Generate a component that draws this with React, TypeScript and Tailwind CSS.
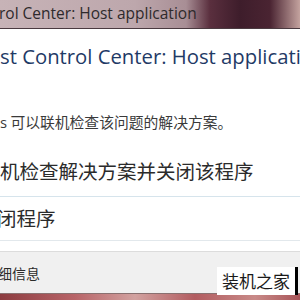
export default function App() {
  const latin = "font-['Open_Sans','Noto_Sans','Noto_Sans_CJK_SC',sans-serif]";
  const cjk = "font-['Noto_Sans_CJK_SC','Noto_Sans',sans-serif]";

  return (
    <div className="relative flex h-[300px] w-[300px] flex-col overflow-hidden bg-white">
      {/* aero title bar */}
      <div className="flex h-[29px] shrink-0 items-center border-b border-[#4a3a40] bg-[linear-gradient(90deg,#c7b3b7_0%,#bda7ac_45%,#a88e95_62%,#5a2f3e_70%,#3e1d2b_80%,#4a2432_90%,#c4a39f_100%)]">
        <span className={`${latin} -ml-[1px] whitespace-nowrap text-[15.5px] text-[#2e2a2c]`}>
          rol Center: Host application
        </span>
      </div>

      <div className="flex flex-1 flex-col">
        <h1 className={`${latin} mt-[13px] whitespace-nowrap text-[20.3px] leading-[28px] text-[#1f3a66]`}>
          st Control Center: Host application
        </h1>

        <p className={`${cjk} mt-[42px] whitespace-nowrap text-[14.8px] leading-[20px] text-[#3a3a3a]`}>
          <span className={latin}>s</span> 可以联机检查该问题的解决方案。
        </p>

        <div className={`${cjk} mt-[25px] whitespace-nowrap text-[19.5px] leading-[28px] text-[#2b2b2b]`}>
          机检查解决方案并关闭该程序
        </div>
        <div className="mt-[11px] h-px bg-[#d6e4ec]" />

        <div className={`${cjk} mt-[7px] -ml-[3px] whitespace-nowrap text-[19.5px] leading-[28px] text-[#2b2b2b]`}>
          闭程序
        </div>
        <div className="mt-[8px] h-px bg-[#e2e8ec]" />

        <div className="mt-[10px] flex flex-1 items-center border-t border-[#dcdcdc] bg-[#f0f0f0]">
          <span className={`${cjk} -ml-[2px] mt-[2px] whitespace-nowrap text-[14px] text-[#2b2b2b]`}>
            细信息
          </span>
        </div>
      </div>

      {/* blurred desktop below the dialog */}
      <div className="h-[7px] shrink-0 border-t border-[#8a7070] bg-[linear-gradient(90deg,#8c3c40_0%,#b86468_25%,#d2a2a0_45%,#b25c60_65%,#c88a88_85%,#a85458_100%)]" />

      <div className={`${cjk} absolute left-[217px] top-[267px] flex h-[28px] w-[81px] items-center justify-center border-r-[3px] border-black bg-white text-[17px] text-[#1a1a1a]`}>
        装机之家
      </div>
    </div>
  );
}
